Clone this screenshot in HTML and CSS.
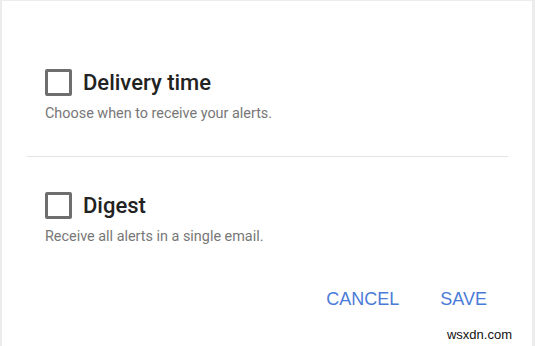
FILE: index.html
```html
<!DOCTYPE html>
<html lang="en">
<head>
    <meta charset="UTF-8">
    <meta name="viewport" content="width=device-width, initial-scale=1.0">
    <title>Alert settings</title>
    <link rel="stylesheet" href="styles.css">
</head>
<body>
    <div class="dialog">
        <div class="option first">
            <label class="option-row">
                <span class="checkbox"></span>
                <span class="option-title">Delivery time</span>
            </label>
            <div class="option-desc">Choose when to receive your alerts.</div>
        </div>

        <div class="divider"></div>

        <div class="option">
            <label class="option-row">
                <span class="checkbox"></span>
                <span class="option-title">Digest</span>
            </label>
            <div class="option-desc">Receive all alerts in a single email.</div>
        </div>

        <div class="actions">
            <button class="btn">CANCEL</button>
            <button class="btn">SAVE</button>
        </div>

        <div class="watermark">wsxdn.com</div>
    </div>
</body>
</html>
```

FILE: styles.css
```css
body {
    margin: 0;
    background-color: #ececec;
    font-family: Roboto, 'Liberation Sans', sans-serif;
}
.dialog {
    background-color: white;
    margin: 1px 3px 0 2px;
    height: 345px;
    box-sizing: border-box;
    padding-top: 67px;
    display: flex;
    flex-direction: column;
}
.option {
    padding: 0 43px;
}
.option-row {
    display: flex;
    align-items: center;
    gap: 11px;
    height: 28px;
}
.checkbox {
    width: 21px;
    height: 21px;
    border: 3px solid #6e6e6e;
    border-radius: 2px;
}
.option-title {
    font-size: 22px;
    font-weight: 500;
    color: #222;
}
.option-desc {
    margin-top: 9px;
    font-size: 14.4px;
    line-height: 17px;
    color: #777;
}
.divider {
    height: 1px;
    background-color: #e2e2e2;
    margin: 34px 24px 34px 25px;
}
.actions {
    display: flex;
    justify-content: flex-end;
    gap: 41px;
    padding-right: 45px;
    margin-top: 44px;
}
.btn {
    border: none;
    background: none;
    padding: 0;
    font-family: 'Liberation Sans', Arial, sans-serif;
    font-size: 18px;
    color: #4b7bd8;
}
.watermark {
    margin-top: auto;
    align-self: flex-end;
    margin-right: 20px;
    margin-bottom: 4px;
    font-family: 'Liberation Sans', Arial, sans-serif;
    font-size: 13px;
    color: #111;
}
```
